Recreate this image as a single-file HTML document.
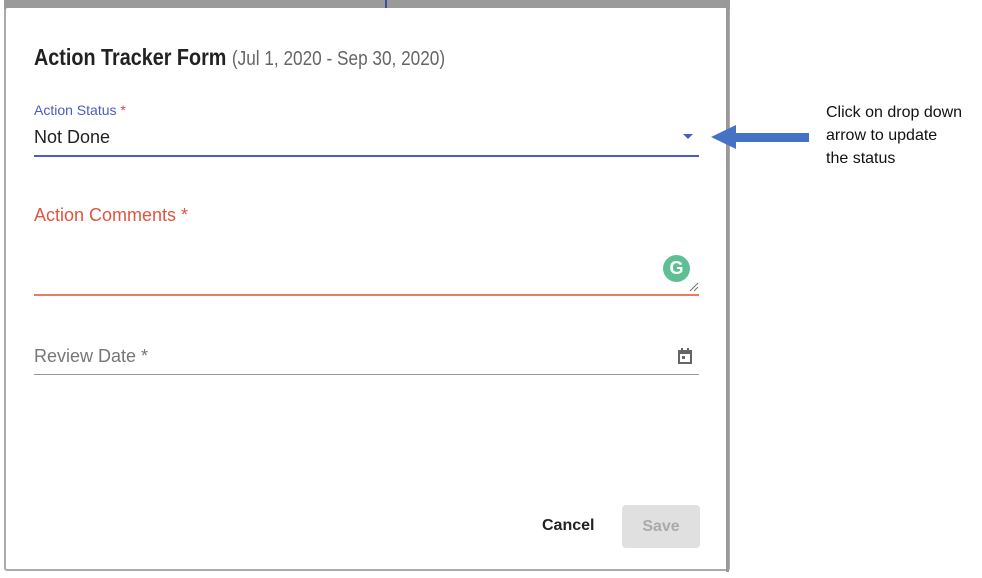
<!DOCTYPE html>
<html><head><style>
body{margin:0;width:982px;height:578px;background:#fff;position:relative;overflow:hidden;font-family:"Liberation Sans",sans-serif}
.a{position:absolute}
</style></head><body>
<div class="a" style="left:0;top:0;width:730px;height:10px;background:#9a9a9a"></div>
<div class="a" style="left:0;top:0;width:4px;height:578px;background:#fff"></div>
<div class="a" style="left:385px;top:0;width:2px;height:9px;background:#3a4fa0"></div>
<div class="a" style="left:4px;top:8px;width:722px;height:561px;background:#fff;border:2px solid #aaa;border-top:none;border-radius:3px"></div>
<div class="a" style="left:726px;top:0;width:3px;height:572px;background:#999"></div>
<div class="a" style="left:34px;top:44px;font-size:23px;font-weight:bold;color:#222;white-space:nowrap;transform:scaleX(0.86);transform-origin:left">Action Tracker Form <span style="font-size:20px;font-weight:normal;color:#666">(Jul 1, 2020 - Sep 30, 2020)</span></div>
<div class="a" style="left:34px;top:102px;font-size:14px;color:#4a5bc4">Action Status <span style="color:#e0405a">*</span></div>
<div class="a" style="left:34px;top:127px;font-size:18px;color:#222">Not Done</div>
<div class="a" style="left:683px;top:134px;width:0;height:0;border-left:5px solid transparent;border-right:5px solid transparent;border-top:5px solid #4a5bc4"></div>
<div class="a" style="left:34px;top:155px;width:665px;height:2px;background:#4a5bc4"></div>
<div class="a" style="left:34px;top:205px;font-size:18px;color:#e0553e">Action Comments *</div>
<div class="a" style="left:663px;top:255px;width:27px;height:27px;border-radius:50%;background:#5fbf94;color:#fff;font-size:18px;font-weight:bold;text-align:center;line-height:27px">G</div>
<svg class="a" style="left:689px;top:282px" width="10" height="10"><path d="M1 9L9 1M5 9L9 5" stroke="#777" stroke-width="1"/></svg>
<div class="a" style="left:34px;top:294px;width:665px;height:2px;background:#e77a6a"></div>
<div class="a" style="left:34px;top:346px;font-size:18px;color:#777">Review Date *</div>
<svg class="a" style="left:677px;top:348px" width="16" height="17" viewBox="0 0 16 17"><rect x="2" y="3" width="12" height="12" fill="none" stroke="#666" stroke-width="2"/><rect x="2" y="3" width="12" height="3" fill="#666"/><rect x="4" y="0" width="2" height="4" fill="#666"/><rect x="10" y="0" width="2" height="4" fill="#666"/><rect x="5" y="8" width="3" height="3" fill="#666"/></svg>
<div class="a" style="left:34px;top:374px;width:665px;height:1px;background:#999"></div>
<div class="a" style="left:542px;top:517px;font-size:16px;font-weight:bold;color:#222">Cancel</div>
<div class="a" style="left:622px;top:505px;width:78px;height:43px;background:#e0e0e0;border-radius:4px;color:#aaa;font-size:16px;font-weight:bold;text-align:center;line-height:43px">Save</div>
<svg class="a" style="left:708px;top:122px" width="104" height="30"><polygon points="3,15 28,3 28,11 101,11 101,20 28,20 28,27" fill="#4472c4"/></svg>
<div class="a" style="left:826px;top:101px;font-size:16px;line-height:23px;color:#111">Click on drop down<br>arrow to update<br>the status</div>
</body></html>
